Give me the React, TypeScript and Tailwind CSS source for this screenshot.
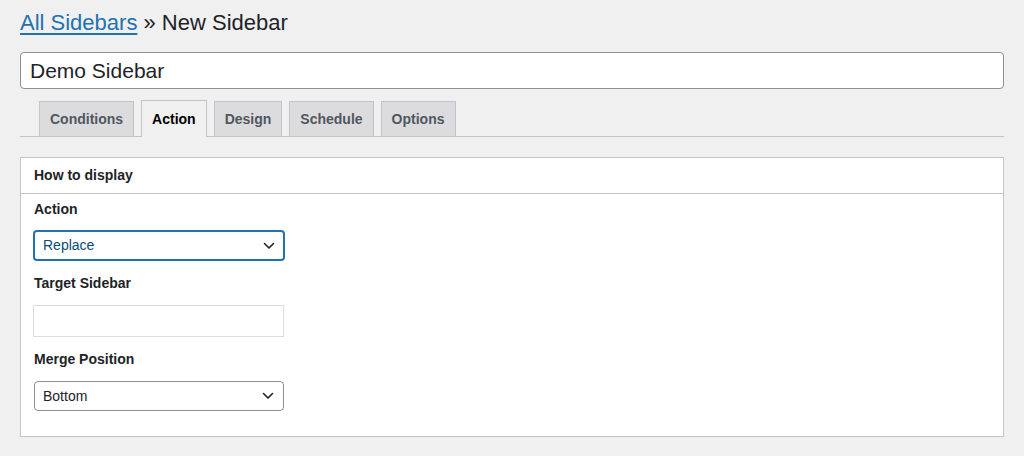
import React from "react";

const tabs = ["Conditions", "Action", "Design", "Schedule", "Options"];

function Chevron() {
  return (
    <svg width="12" height="8" viewBox="0 0 12 8" fill="none" className="shrink-0">
      <path d="M1.5 1.5 L6 6 L10.5 1.5" stroke="#1d2327" strokeWidth="1.6" strokeLinecap="round" strokeLinejoin="round" />
    </svg>
  );
}

export default function App() {
  return (
    <div className="w-[1024px] h-[456px] bg-[#f0f0f1] overflow-hidden text-[#1d2327] font-['Liberation_Sans',Arial,sans-serif]">
      <div className="pl-5 pr-5 pt-[8px]">
        <h1 className="text-[22px] leading-[30px] font-normal">
          <a className="text-[#2271b1] underline underline-offset-[3px]">All Sidebars</a> » New Sidebar
        </h1>

        <div className="mt-[14px] h-[37px] rounded-[4px] border border-[#8c8f94] bg-white flex items-center px-[9px] text-[21px] text-[#1d2327]">
          Demo Sidebar
        </div>

        <div className="mt-[12px] flex items-end gap-[7px] pl-[19px] border-b border-[#c3c4c7] h-[36px]">
          {tabs.map((t) => {
            const active = t === "Action";
            return active ? (
              <div
                key={t}
                className="h-[37px] -mb-px px-[10px] flex items-center border border-b-0 border-[#c3c4c7] bg-[#f0f0f1] text-[14px] font-bold text-black"
              >
                {t}
              </div>
            ) : (
              <div
                key={t}
                className="h-[35px] px-[10px] flex items-center border border-b-0 border-[#c3c4c7] bg-[#dcdcde] text-[14px] font-bold text-[#50575e]"
              >
                {t}
              </div>
            );
          })}
        </div>

        <div className="mt-[20px] bg-white border border-[#c3c4c7]">
          <div className="h-[36px] border-b border-[#c3c4c7] flex items-center px-[13px] text-[14px] font-bold">
            How to display
          </div>
          <div className="pl-[12px] pt-[5px] pb-[25px]">
            <div className="pl-[1px] text-[14px] leading-[20px] font-bold">Action</div>
            <div className="mt-[11px] w-[252px] h-[31px] rounded-[4px] border-2 border-[#2271b1] flex items-center justify-between pl-[8px] pr-[8px] text-[14px] text-[#0a4b78]">
              <span>Replace</span>
              <Chevron />
            </div>

            <div className="mt-[12px] pl-[1px] text-[14px] leading-[20px] font-bold">Target Sidebar</div>
            <div className="mt-[12px] w-[251px] h-[32px] border border-[#dcdcde] bg-white" />

            <div className="mt-[12px] pl-[1px] text-[14px] leading-[20px] font-bold">Merge Position</div>
            <div className="mt-[12px] ml-[1px] w-[250px] h-[30px] rounded-[4px] border border-[#8c8f94] flex items-center justify-between pl-[8px] pr-[9px] text-[14px] text-[#1d2327]">
              <span>Bottom</span>
              <Chevron />
            </div>
          </div>
        </div>
      </div>
    </div>
  );
}
